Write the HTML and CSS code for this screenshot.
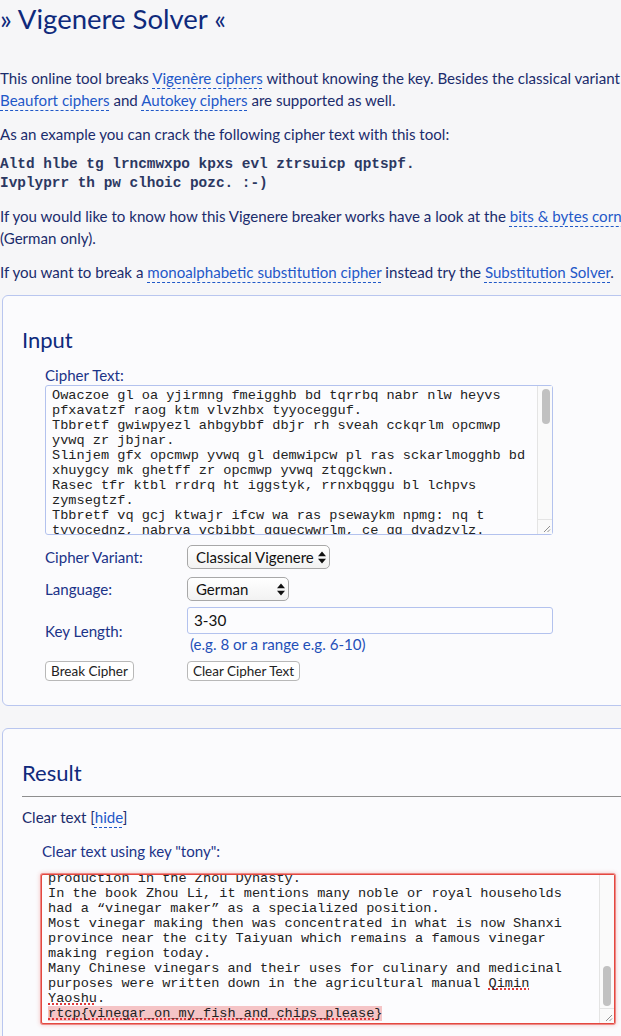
FILE: index.html
```html
<!DOCTYPE html>
<html lang="en">
<head>
<meta charset="utf-8">
<title>Vigenere Solver</title>
<link rel="stylesheet" href="styles.css">
</head>
<body>
<div class="page">
  <h1 class="title">» Vigenere Solver «</h1>
  <p class="text intro">This online tool breaks <a href="#">Vigenère ciphers</a> without knowing the key. Besides the classical variant <a href="#">Beaufort ciphers</a> and <a href="#">Autokey ciphers</a> are supported as well.</p>
  <p class="text">As an example you can crack the following cipher text with this tool:</p>
  <pre class="sample">Altd hlbe tg lrncmwxpo kpxs evl ztrsuicp qptspf.
Ivplyprr th pw clhoic pozc. :-)</pre>
  <p class="text">If you would like to know how this Vigenere breaker works have a look at the <a href="#">bits &amp; bytes corner</a> (German only).</p>
  <p class="text">If you want to break a <a href="#">monoalphabetic substitution cipher</a> instead try the <a href="#">Substitution Solver</a>.</p>

  <section class="box">
    <h2 class="box-title">Input</h2>
    <div class="form">
      <div class="label label-top">Cipher Text:</div>
      <div class="ta-wrap ta-wrap-cipher">
        <div class="ta ta-cipher">Owaczoe gl oa yjirmng fmeigghb bd tqrrbq nabr nlw heyvs pfxavatzf raog ktm vlvzhbx tyyocegguf.
Tbbretf gwiwpyezl ahbgybbf dbjr rh sveah cckqrlm opcmwp yvwq zr jbjnar.
Slinjem gfx opcmwp yvwq gl demwipcw pl ras sckarlmogghb bd xhuygcy mk ghetff zr opcmwp yvwq ztqgckwn.
Rasec tfr ktbl rrdrq ht iggstyk, rrnxbqggu bl lchpvs zymsegtzf.
Tbbretf vq gcj ktwajr ifcw wa ras psewaykm npmg: nq t tyyocednz, nabrva vcbibbt gguecwwrlm, ce gg dvadzylz.
Wmgsgfr gifiawdv rvu vg xhqyfnt cckqrlm ghmlgblc kjr nwgvg bd opcmwp yvwq rg grmpfvq mk nlw Kbci Lrlcsbm, kjr zpkr wq lvsfak ifpg nayh.
Gc gps gctm Kbci Ag, gh fxgxvbgl fmgz aaczx hk fbmyb ykmgsjwzrq rtk t "tbbretf zyqrp" nq t ghxrwtczmqr hcfbvghc.
Fbgh tbbretf zyqrxz vvrr ptw qhblrgvkfmxr wg pytm wq lhe Qyyblq wkhtzdbt gxtt kjr qgrm Khgwhrg phbpv kxzpwcg t gmehhl tbbretf zyqrxz kxzwhc grwri.
Zrlx Ptwahxl tbbretfw shr mvxwe abml mpe rnfgbtjr rtk cvrwfgbtd hnivhcfg yvjr pfwmygl qhjg ag kjr nzxwcnkgvcps lrlrtr Dvzbl Lrhlpn.
rtcp{oeatkbh_mb_fw_wvsu_yfz_pcqph_ifcrfv}</div>
        <div class="sb-track"></div>
        <div class="sb-thumb sb-thumb-cipher"></div>
        <div class="sb-corner"><svg width="15" height="15" viewBox="0 0 15 15"><path d="M13 7 L7 13 M13 10.5 L10.5 13" stroke="#8f8f8f" stroke-width="1"/></svg></div>
      </div>

      <div class="form-row row-variant">
        <div class="label">Cipher Variant:</div>
        <span class="select-wrap">
          <select class="select select-variant"><option>Classical Vigenere</option><option>Beaufort</option><option>Autokey</option></select>
          <svg class="select-arrow" width="8" height="13" viewBox="0 0 8 13"><path d="M0 5.2 L4 0.5 L8 5.2 Z M0 7.8 L4 12.5 L8 7.8 Z" fill="#111"/></svg>
        </span>
      </div>

      <div class="form-row row-lang">
        <div class="label">Language:</div>
        <span class="select-wrap">
          <select class="select select-lang"><option>German</option><option>English</option></select>
          <svg class="select-arrow" width="8" height="13" viewBox="0 0 8 13"><path d="M0 5.2 L4 0.5 L8 5.2 Z M0 7.8 L4 12.5 L8 7.8 Z" fill="#111"/></svg>
        </span>
      </div>

      <div class="form-row row-key">
        <div class="label">Key Length:</div>
        <div class="control">
          <input class="key-input" type="text" value="3-30">
          <div class="hint">(e.g. 8 or a range e.g. 6-10)</div>
        </div>
      </div>

      <div class="form-row row-buttons">
        <div class="label"><button class="btn btn-break">Break Cipher</button></div>
        <button class="btn btn-clear">Clear Cipher Text</button>
      </div>
    </div>
  </section>

  <section class="box result-box">
    <h2 class="box-title">Result</h2>
    <hr class="rule">
    <div class="clear-line">Clear text [<a href="#">hide</a>]</div>
    <div class="key-line">Clear text using key "tony":</div>
    <div class="ta-wrap ta-wrap-result">
      <div class="ta ta-result"><div class="ta-inner">Vinegar has been made and used by people for thousands of years.
Traces of it have been found in Egyptian urns from around 3000 BC.
In China, professional vinegar making was documented very early and
vinegar became one of the seven necessities of daily life.
Chinese records show there was an official in charge of vinegar production in the Zhou Dynasty.
In the book Zhou Li, it mentions many noble or royal households had a “vinegar maker” as a specialized position.
Most vinegar making then was concentrated in what is now Shanxi province near the city Taiyuan which remains a famous vinegar making region today.
Many Chinese vinegars and their uses for culinary and medicinal purposes were written down in the agricultural manual <span class="sp">Qimin</span> <span class="sp">Yaoshu</span>.
<span class="flag"><span class="sp">rtcp{vinegar_on_my_fish_and_chips_please</span>}</span></div></div>
      <div class="sb-track"></div>
      <div class="sb-thumb sb-thumb-result"></div>
      <div class="sb-corner"><svg width="15" height="15" viewBox="0 0 15 15"><path d="M13 7 L7 13 M13 10.5 L10.5 13" stroke="#8f8f8f" stroke-width="1"/></svg></div>
    </div>
  </section>
</div>
</body>
</html>
```

FILE: styles.css
```css
html {
  overflow: hidden;
  background: #f6f6f8;
}

body {
  margin: 0;
  font-family: Lato, "Noto Sans", sans-serif;
  font-size: 15.1px;
  color: #1b2c6c;
}

.page {
  width: 660px;
}

.title {
  margin: 0;
  font-size: 27.5px;
  line-height: 38px;
  font-weight: 400;
  color: #0f2a7c;
}

.text {
  margin: 12px 0 0;
  line-height: 22px;
}

.intro {
  margin-top: 29px;
}

a {
  color: #1f58c8;
  text-decoration: underline dashed 1px;
  text-underline-offset: 4px;
}

.sample {
  margin: 9.5px 0 0;
  font-family: "Liberation Mono", "Courier New", monospace;
  font-weight: bold;
  font-size: 14.4px;
  line-height: 19px;
  color: #2c3862;
}

.box {
  margin: 12px 0 0 2px;
  border: 1px solid #b9c6ef;
  border-radius: 6px;
  background: #fbfbfd;
  padding: 30px 0 24px 19px;
}

.result-box {
  margin-top: 22px;
  padding-bottom: 40px;
}

.box-title {
  margin: 0;
  font-size: 22px;
  line-height: 28px;
  font-weight: 400;
  color: #0f2a7c;
}

.form {
  margin-left: 23px;
}

.label {
  flex: none;
  width: 142px;
  line-height: 22px;
  color: #1b3388;
}

.label-top {
  line-height: 19px;
  margin-top: 12px;
}

.ta-wrap {
  position: relative;
}

.ta-wrap-cipher {
  width: 508px;
  height: 150px;
}

.ta-wrap-result {
  width: 574px;
  height: 150px;
  margin: 12px 0 0 19px;
}

.ta {
  box-sizing: border-box;
  width: 100%;
  height: 100%;
  font-family: "Liberation Mono", "Courier New", monospace;
  font-size: 13.6px;
  line-height: 15px;
  color: #222222;
  white-space: pre-wrap;
  background: #fcfcfe;
  overflow: hidden;
}

.ta-cipher {
  border: 1px solid #b3c2ee;
  border-radius: 3px;
  padding: 2px 22px 2px 6px;
}

.ta-result {
  display: flex;
  flex-direction: column-reverse;
  padding: 2px 40px 2px 6px;
  border: 1px solid #e4473f;
  border-radius: 2px;
  box-shadow: 0 0 0 1px rgba(228, 71, 63, 0.55), 0 0 4px 1px rgba(228, 71, 63, 0.3);
}

.ta-inner {
  flex: none;
}

.sb-track {
  position: absolute;
  top: 1px;
  right: 1px;
  bottom: 16px;
  width: 14px;
  background: #fafafa;
  border-left: 1px solid #e4e4e4;
}

.sb-thumb {
  position: absolute;
  right: 3px;
  width: 8px;
  border-radius: 4px;
  background: #c1c1c1;
}

.sb-thumb-cipher {
  top: 4px;
  height: 35px;
}

.sb-thumb-result {
  right: 4px;
  top: 92px;
  height: 40px;
}

.sb-corner {
  position: absolute;
  right: 1px;
  bottom: 1px;
  box-sizing: border-box;
  width: 15px;
  height: 15px;
  background: #fafafa;
  border-left: 1px solid #e4e4e4;
  border-top: 1px solid #e4e4e4;
}

.sb-corner svg {
  display: block;
  margin: -1px 0 0 -1px;
}

.form-row {
  display: flex;
  align-items: center;
}

.control {
  display: flex;
  flex-direction: column;
  align-items: flex-start;
}

.row-variant {
  margin-top: 10px;
}

.row-lang {
  margin-top: 8px;
}

.row-key {
  margin-top: 6px;
}

.row-buttons {
  margin-top: 6px;
}

.select-wrap {
  position: relative;
  display: inline-block;
  height: 24px;
}

.select {
  appearance: none;
  -webkit-appearance: none;
  box-sizing: border-box;
  display: block;
  height: 24px;
  margin: 0;
  padding: 0 13px 0 8px;
  font-family: Lato, "Noto Sans", sans-serif;
  font-size: 15px;
  color: #111;
  border: 1px solid #a8a8a8;
  border-radius: 5px;
  background: linear-gradient(#ffffff, #f2f2f2);
}

.select-variant {
  width: 143px;
}

.select-lang {
  width: 102px;
}

.select-arrow {
  position: absolute;
  right: 4px;
  top: 6px;
  pointer-events: none;
}

.key-input {
  box-sizing: border-box;
  width: 366px;
  height: 27px;
  margin: 0;
  padding: 0 6px;
  font-family: Lato, "Noto Sans", sans-serif;
  font-size: 15.3px;
  color: #111;
  border: 1px solid #b3c2ee;
  border-radius: 3px;
  background: #fcfcfe;
}

.hint {
  margin-left: 3px;
  line-height: 21px;
  color: #1f4fb8;
}

.btn {
  box-sizing: border-box;
  display: block;
  height: 20px;
  padding: 0;
  font-family: Lato, "Noto Sans", sans-serif;
  font-size: 13.5px;
  color: #222;
  background: #ffffff;
  border: 1px solid #b8b8b8;
  border-radius: 4px;
}

.btn-break {
  width: 89px;
}

.btn-clear {
  width: 113px;
}

.rule {
  height: 0;
  margin: 9px 0 0;
  border: 0;
  border-top: 1px solid #8e8e8e;
}

.clear-line {
  margin-top: 9px;
  line-height: 22px;
}

.key-line {
  margin: 12px 0 0 20px;
  line-height: 22px;
  color: #1b3388;
}

.sp {
  text-decoration: underline dotted #e0383a;
  text-decoration-thickness: 2px;
  text-underline-offset: 2px;
  text-decoration-skip-ink: none;
}

.flag {
  background: #f5c4c6;
}
```
